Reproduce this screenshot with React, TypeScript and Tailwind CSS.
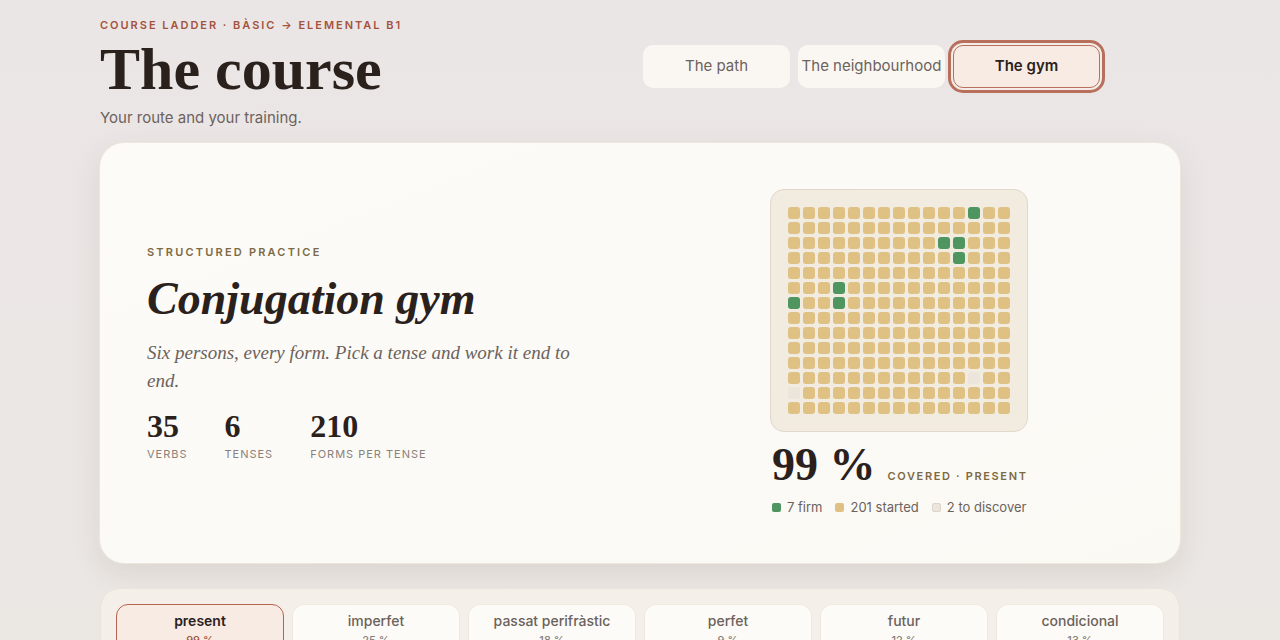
import React from 'react';

const serif = { fontFamily: '"Liberation Serif", "Times New Roman", serif' };

const tabs = ['The path', 'The neighbourhood', 'The gym'];

const tenses = [
  { name: 'present', pct: '99 %', active: true },
  { name: 'imperfet', pct: '25 %' },
  { name: 'passat perifràstic', pct: '18 %' },
  { name: 'perfet', pct: '9 %' },
  { name: 'futur', pct: '12 %' },
  { name: 'condicional', pct: '13 %' },
];

const firm = new Set(['0-12', '2-10', '2-11', '3-11', '5-3', '6-0', '6-3']);
const empty = new Set(['11-12', '12-0']);

const cells: string[] = [];
for (let r = 0; r < 14; r++) {
  for (let c = 0; c < 15; c++) {
    const k = `${r}-${c}`;
    cells.push(firm.has(k) ? 'firm' : empty.has(k) ? 'empty' : 'started');
  }
}

export default function App() {
  return (
    <div
      className="min-h-screen w-full bg-gradient-to-b from-[#ebe6e6] to-[#ebe7e3] text-[#2a211c]"
      style={{ fontFamily: 'Inter, "Noto Sans", sans-serif' }}
    >
      <div className="mx-auto w-[1080px] pt-[17px]">
        {/* header */}
        <div className="flex items-start justify-between">
          <div>
            <div className="text-[11px] font-semibold uppercase tracking-[0.18em] text-[#a3533d]">
              Course ladder · Bàsic → Elemental B1
            </div>
            <h1 style={serif} className="mt-[5px] text-[60px] font-bold leading-[60px] text-[#2a211c]">
              The course
            </h1>
            <p className="mt-[8px] text-[15px] text-[#6b625c]">Your route and your training.</p>
          </div>
          <div className="mr-[80px] mt-[28px] flex items-center gap-[8px]">
            {tabs.map((t) => {
              const active = t === 'The gym';
              return (
                <div
                  key={t}
                  className={
                    active
                      ? 'flex h-[43px] w-[147px] items-center justify-center whitespace-nowrap rounded-[10px] border border-[#b8705d] bg-[#f7ebe3] text-[15px] font-semibold text-[#2a211c] shadow-[0_0_0_2px_#f4ece7,0_0_0_5px_#b8705d]'
                      : 'flex h-[43px] w-[147px] items-center justify-center whitespace-nowrap rounded-[10px] bg-[#faf7f3] text-[15px] text-[#6b625c]'
                  }
                >
                  {t}
                </div>
              );
            })}
          </div>
        </div>

        {/* main card */}
        <div className="mt-[14px] grid h-[420px] grid-cols-2 items-center gap-12 rounded-[24px] bg-gradient-to-br from-[#fcfbf8] to-[#fbf9f4] px-[47px] shadow-[0_10px_30px_rgba(70,45,30,0.10)] ring-1 ring-[#ece6dd]">
          <div>
            <div className="text-[11px] font-semibold uppercase leading-[16px] tracking-[0.2em] text-[#7d6a44]">
              Structured practice
            </div>
            <h2 style={serif} className="mt-[11px] text-[46px] font-bold italic leading-[56px] text-[#2a211c]">
              Conjugation gym
            </h2>
            <p style={serif} className="mt-[12px] w-[440px] text-[19px] italic leading-[28px] text-[#6b625c]">
              Six persons, every form. Pick a tense and work it end to end.
            </p>
            <div className="mt-[13px] flex gap-[37px]">
              {[
                ['35', 'Verbs'],
                ['6', 'Tenses'],
                ['210', 'Forms per tense'],
              ].map(([n, l]) => (
                <div key={l}>
                  <div style={serif} className="text-[32px] font-bold leading-[36px] text-[#2a211c]">
                    {n}
                  </div>
                  <div className="mt-[2px] whitespace-nowrap text-[11px] uppercase tracking-[0.09em] text-[#8a817a]">{l}</div>
                </div>
              ))}
            </div>
          </div>

          <div className="flex flex-col items-center">
            <div className="rounded-[14px] border border-[#e0d8ca] bg-[#f1ebe0] p-[17px]">
              <div className="grid grid-cols-[repeat(15,12px)] gap-[3px]">
                {cells.map((c, i) => (
                  <div
                    key={i}
                    className={
                      c === 'firm'
                        ? 'h-[12px] w-[12px] rounded-[3px] bg-[#4f9560]'
                        : c === 'empty'
                        ? 'h-[12px] w-[12px] rounded-[3px] bg-[#ebe5dc]'
                        : 'h-[12px] w-[12px] rounded-[3px] bg-[#dfc184]'
                    }
                  />
                ))}
              </div>
            </div>
            <div className="mt-[8px] flex w-[259px] items-baseline gap-[12px] whitespace-nowrap pl-[3px]">
              <span style={serif} className="shrink-0 text-[46px] font-bold leading-[50px] text-[#2a211c]">
                99 %
              </span>
              <span className="shrink-0 text-[11px] font-semibold uppercase tracking-[0.15em] text-[#7d6a44]">
                Covered · present
              </span>
            </div>
            <div className="mt-[8px] flex w-[259px] items-center gap-[13px] whitespace-nowrap pl-[3px] text-[13px] text-[#6b625c]">
              <span className="flex shrink-0 items-center gap-[6px]">
                <span className="h-[9px] w-[9px] rounded-[2px] bg-[#4f9560]" />7 firm
              </span>
              <span className="flex shrink-0 items-center gap-[6px]">
                <span className="h-[9px] w-[9px] rounded-[2px] bg-[#dfc184]" />201 started
              </span>
              <span className="flex shrink-0 items-center gap-[6px]">
                <span className="h-[9px] w-[9px] rounded-[2px] border border-[#ddd4ca] bg-[#ebe5dc]" />2 to discover
              </span>
            </div>
          </div>
        </div>

        {/* tense picker */}
        <div className="mt-[25px] rounded-[20px] border border-[#ebe4d8] bg-[#f4f0e9] p-[15px]">
          <div className="grid grid-cols-6 gap-[8px]">
            {tenses.map((t) => (
              <div
                key={t.name}
                className={
                  t.active
                    ? 'flex h-[60px] flex-col items-center rounded-[12px] border border-[#b5654f] bg-[#f7ebe3] pt-[7px]'
                    : 'flex h-[60px] flex-col items-center rounded-[12px] border border-[#efe9e0] bg-[#fdfbf7] pt-[7px]'
                }
              >
                <div
                  className={
                    t.active
                      ? 'text-[14px] font-semibold leading-[18px] text-[#2a211c]'
                      : 'text-[14px] font-medium leading-[18px] text-[#6b625c]'
                  }
                >
                  {t.name}
                </div>
                <div
                  className={
                    t.active
                      ? 'mt-[2px] text-[11px] font-medium text-[#a3533d]'
                      : 'mt-[2px] text-[11px] font-medium text-[#8a817a]'
                  }
                >
                  {t.pct}
                </div>
              </div>
            ))}
          </div>
        </div>
      </div>
    </div>
  );
}
